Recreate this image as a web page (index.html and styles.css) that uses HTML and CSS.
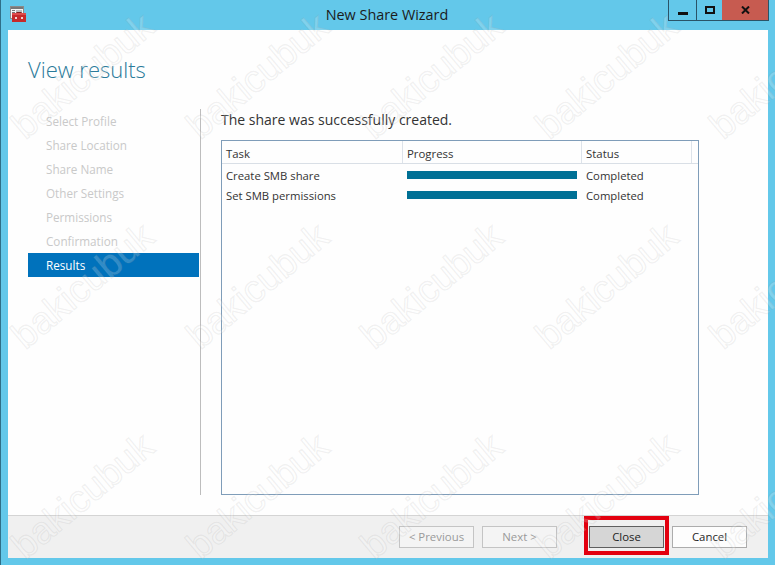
FILE: index.html
```html
<!DOCTYPE html>
<html lang="en">
<head>
<meta charset="utf-8">
<title>New Share Wizard</title>
<link rel="stylesheet" href="styles.css">
</head>
<body>
<div class="window">
  <header class="titlebar">
    <svg class="app-icon" width="17" height="17" viewBox="0 0 17 17">
      <rect x="0.5" y="0.5" width="13" height="12" fill="#f4f4f4" stroke="#8a8a8a"/>
      <rect x="1" y="1" width="12" height="2" fill="#777"/>
      <rect x="2" y="4" width="3" height="1" fill="#777"/>
      <rect x="2" y="6" width="3" height="1" fill="#777"/>
      <rect x="6" y="4" width="6" height="2" fill="#bbb"/>
      <path d="M6.5 8V6.5h5V8" fill="none" stroke="#7d2020"/>
      <rect x="2" y="7" width="14" height="9" fill="#c62a2a"/>
      <rect x="2" y="7" width="14" height="2" fill="#de4a4a"/>
      <rect x="5" y="11" width="2" height="2" fill="#f3d0d0"/>
      <rect x="11" y="11" width="2" height="2" fill="#f3d0d0"/>
    </svg>
    <h1 class="window-title">New Share Wizard</h1>
    <div class="caption">
      <div class="cap cap-min"><span class="glyph-min"></span></div>
      <div class="cap cap-max"><span class="glyph-max"></span></div>
      <div class="cap cap-close">
        <svg width="9" height="8" viewBox="0 0 9 8"><path d="M1 0.5L8 7.5M8 0.5L1 7.5" stroke="#111" stroke-width="2" fill="none"/></svg>
      </div>
    </div>
  </header>
  <div class="client">
    <div class="content">
      <h2 class="page-title">View results</h2>
      <div class="columns">
        <nav class="steps">
          <div class="step">Select Profile</div>
          <div class="step">Share Location</div>
          <div class="step">Share Name</div>
          <div class="step">Other Settings</div>
          <div class="step">Permissions</div>
          <div class="step">Confirmation</div>
          <div class="step step-active">Results</div>
        </nav>
        <main class="panel">
          <p class="message">The share was successfully created.</p>
          <div class="list">
            <div class="list-head">
              <div class="th th-task">Task</div>
              <div class="th th-progress">Progress</div>
              <div class="th th-status">Status</div>
              <div class="th th-rest"></div>
            </div>
            <div class="list-row">
              <div class="td-task">Create SMB share</div>
              <div class="td-progress"><div class="bar"></div></div>
              <div class="td-status">Completed</div>
            </div>
            <div class="list-row">
              <div class="td-task">Set SMB permissions</div>
              <div class="td-progress"><div class="bar"></div></div>
              <div class="td-status">Completed</div>
            </div>
          </div>
        </main>
      </div>
    </div>
    <footer class="footer">
      <button class="btn btn-disabled">&lt; Previous</button>
      <button class="btn btn-disabled btn-next">Next &gt;</button>
      <button class="btn btn-close">Close</button>
      <button class="btn">Cancel</button>
    </footer>
  </div>
  <div class="watermarks" aria-hidden="true">
    <span class="wm">bakicubuk</span><span class="wm">bakicubuk</span><span class="wm">bakicubuk</span><span class="wm">bakicubuk</span><span class="wm">bakicubuk</span>
    <span class="wm">bakicubuk</span><span class="wm">bakicubuk</span><span class="wm">bakicubuk</span><span class="wm">bakicubuk</span><span class="wm">bakicubuk</span>
    <span class="wm">bakicubuk</span><span class="wm">bakicubuk</span><span class="wm">bakicubuk</span><span class="wm">bakicubuk</span><span class="wm">bakicubuk</span>
  </div>
</div>
</body>
</html>
```
FILE: styles.css
```css
* { box-sizing: border-box; }
html, body { margin: 0; padding: 0; }
body { width: 775px; height: 565px; overflow: hidden; font-family: "Open Sans", "Noto Sans", sans-serif; }

.window {
  position: relative;
  width: 775px;
  height: 565px;
  background: #63c8ea;
  border-left: 1px solid #2f6f88;
  display: flex;
  flex-direction: column;
  overflow: hidden;
}

.titlebar { height: 30px; display: flex; position: relative; flex: none; }
.app-icon { position: absolute; left: 9px; top: 6px; }
.window-title {
  flex: 1;
  margin: 0;
  padding: 5px 2px 0 0;
  text-align: center;
  font-size: 14.4px;
  line-height: 20px;
  font-weight: 400;
  color: #1b1b1b;
}
.caption {
  position: absolute;
  left: 667px;
  top: 0;
  height: 21px;
  display: flex;
  border: 1px solid #2a5468;
  border-top: 0;
}
.cap { height: 20px; display: flex; align-items: center; justify-content: center; }
.cap-min { width: 28px; border-right: 1px solid #2a5468; }
.cap-max { width: 25px; }
.cap-close { width: 46px; background: #c75b50; }
.glyph-min { width: 10px; height: 3px; background: #111; margin-top: 6px; }
.glyph-max { width: 10px; height: 8px; border: 2px solid #111; }

.client {
  margin: 0 7px 7px 7px;
  flex: 1;
  background: #fefefe;
  display: flex;
  flex-direction: column;
  min-height: 0;
}
.content { flex: 1; padding: 0 0 20px 20px; display: flex; flex-direction: column; min-height: 0; }
.page-title {
  margin: 0;
  padding-top: 23px;
  height: 79px;
  font-size: 22px;
  line-height: 32px;
  font-weight: 300;
  color: #2a7a9a;
}
.columns { flex: 1; display: flex; min-height: 0; }
.steps {
  width: 172px;
  display: flex;
  flex-direction: column;
}
.step {
  width: 171px;
  height: 24px;
  padding: 0 0 0 18px;
  font-size: 11.7px;
  line-height: 24px;
  color: #c9c9c9;
  flex: none;
}
.step-active { background: #0072bc; color: #fff; }
.panel {
  flex: 1;
  border-left: 1px solid #bdbdbd;
  padding-left: 20px;
  display: flex;
  flex-direction: column;
  min-height: 0;
}
.message {
  margin: 0;
  height: 31px;
  padding-top: 1px;
  font-size: 14px;
  line-height: 20px;
  color: #333;
}
.list {
  width: 478px;
  flex: 1;
  border: 1px solid #7f9db9;
  background: transparent;
}
.list-head { display: flex; height: 23px; border-bottom: 1px solid #d9dfe6; }
.th {
  height: 22px;
  padding: 1px 0 0 4px;
  font-size: 11.4px;
  line-height: 24px;
  color: #333;
  border-right: 1px solid #dde3ea;
}
.th-task { width: 181px; }
.th-progress { width: 179px; }
.th-status { width: 110px; }
.th-rest { flex: 1; border-right: 0; }
.list-row { display: flex; height: 20px; font-size: 11.3px; line-height: 20px; color: #333; }
.list-head + .list-row { margin-top: 1px; }
.td-task, .td-status { padding-top: 1px; }
.td-task { width: 181px; padding-left: 4px; }
.td-progress { width: 179px; padding: 6px 4px 0 4px; }
.td-status { padding-left: 4px; }
.bar { width: 170px; height: 8px; background: #007095; }

.footer {
  height: 43px;
  flex: none;
  background: #f0f0f0;
  border-top: 1px solid #d4d4d4;
  display: flex;
  padding: 10px 20px 0 391px;
  gap: 8px;
  align-items: flex-start;
}
.btn {
  width: 75px;
  height: 22px;
  padding: 0;
  font-family: inherit;
  font-size: 11.4px;
  line-height: 20px;
  color: #222;
  background: #fdfdfd;
  border: 1px solid #acacac;
  flex: none;
}
.btn-disabled { color: #9a9a9a; background: #f4f4f4; border-color: #c4c4c4; }
.btn-next { margin-right: 24px; }
.btn-close { position: relative; background: #d6d6d6; border-color: #5f5f5f; }
.btn-close::after {
  content: "";
  position: absolute;
  left: -6px;
  right: -6px;
  top: -11px;
  bottom: -8px;
  border: 4px solid #e3000f;
}

.watermarks {
  position: absolute;
  left: -4px;
  top: 2px;
  width: 900px;
  height: 630px;
  display: grid;
  grid-template-columns: repeat(5, 174.5px);
  grid-auto-rows: 210px;
  pointer-events: none;
}
.wm {
  display: block;
  width: 170px;
  height: 44px;
  margin: 52px 0 0 0;
  text-align: center;
  font-family: "Liberation Sans", Arial, sans-serif;
  font-size: 38px;
  line-height: 44px;
  color: rgba(255, 255, 255, 0.2);
  -webkit-text-stroke: 1.2px rgba(150, 150, 150, 0.14);
  transform: rotate(-40deg);
}
```
